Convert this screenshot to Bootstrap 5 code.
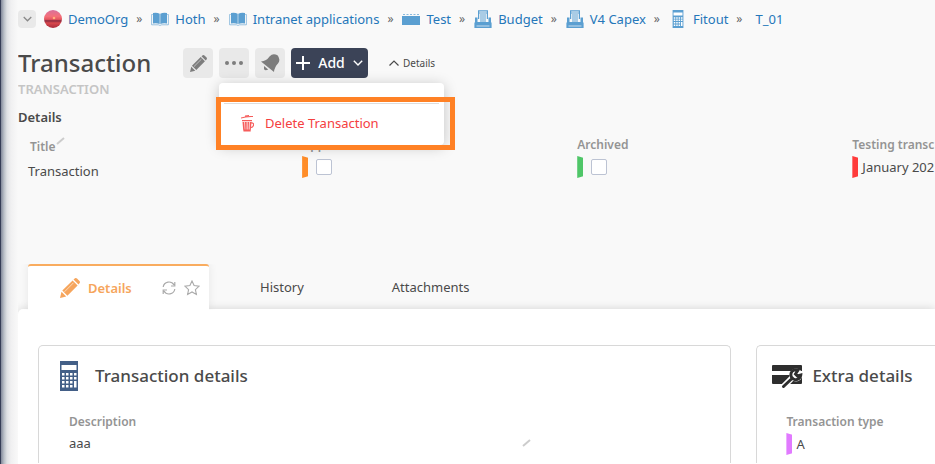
<!DOCTYPE html>
<html lang="en">
<head>
<meta charset="utf-8">
<meta name="viewport" content="width=device-width, initial-scale=1">
<title>Transaction</title>
<link href="https://cdn.jsdelivr.net/npm/bootstrap@5.3.0/dist/css/bootstrap.min.css" rel="stylesheet">
<style>
  body { font-family: "Noto Sans", "Open Sans", sans-serif; font-size: 13px; line-height: 20px; color: #4a4a4a; background: #f9f9f9; overflow: hidden; }
  svg { display: block; flex: none; }
  .shell { min-height: 100vh; border-left: 1px solid #363e57; }
  .edge { width: 17px; flex: none; background: linear-gradient(to right, #81889a 0, #b9bfc7 3px, #dfe1e4 6px, #f0f0f1 10px, #f9f9f9 17px); }
  .crumbs { padding-top: 9px; }
  .crumbs a { color: #2577b9; text-decoration: none; gap: 6px; }
  .crumbs li { display: flex; align-items: center; }
  .crumbs li + li::before { content: "»"; color: #666; font-size: 12px; margin: 0 9px 0 8px; line-height: 20px; }
  .ic { color: #5b9fd1; }
  .toggle-box { width: 18px; height: 18px; background: #e9e9e9; color: #888; border: 0; border-radius: 4px; margin-right: 8px; }
  .head-row { margin-top: 19px; height: 30px; }
  h1 { font-size: 24px; line-height: 30px; font-weight: 500; margin: 0; width: 165px; }
  .tools { gap: 6px; }
  .tool { width: 30px; height: 30px; background: #e9e9e9; color: #7d7d7d; border: 0; border-radius: 4px; }
  .add { height: 30px; width: 77px; background: #3b4357; color: #fff; border: 0; border-radius: 4px; font-weight: 500; font-size: 14px; padding: 0 5px; }
  .fold { border: 0; background: none; font-size: 10px; color: #4a4a4a; margin-left: 15px; }
  .actions { top: 35px; left: 0; width: 225px; background: #fff; border-radius: 4px; box-shadow: 0 2px 14px rgba(0,0,0,.22); padding: 20px 5px 3px; z-index: 5; }
  .actions hr { margin: 0; border-top: 1px solid #ddd; opacity: 1; }
  .remove { color: #f5403f; background: none; border: 0; height: 38px; padding: 0 17px; gap: 11px; }
  .callout { top: 14px; left: -3px; right: -11px; bottom: -5px; border: 5px solid #ff8125; pointer-events: none; }
  .kind { font-size: 13px; line-height: 20px; margin-top: 1px; font-weight: 600; color: #c5c5c5; }
  h2 { font-size: 13px; line-height: 20px; font-weight: 600; margin: 8px 0 0; }
  .fields { margin: 8px 0 0 9px; height: 129px; }
  .field-col { flex: 0 0 30.3%; white-space: nowrap; }
  .name-col { padding: 2px 0 0 1px; }
  .name-col .cap { padding-left: 2px; }
  .cap { font-size: 12px; line-height: 20px; font-weight: 600; color: #949494; display: block; }
  .fields .cap { margin-bottom: 1px; }
  .flag { width: 6px; height: 22px; flex: none; clip-path: polygon(0 0, 100% 8%, 100% 92%, 0 100%); }
  .orange { background: #ff8d29; } .green { background: #4fc668; } .red { background: #ff3b3b; } .violet { background: #e17aff; }
  .form-check-input.tick { width: 16px; height: 16px; border: 1px solid #bcc3d3; border-radius: 2px; margin: 0 0 0 8px; }
  .tabs { margin-left: 10px; height: 45px; }
  .tab-on { width: 181px; height: 46px; background: #fff; border-top: 2px solid #f9ac5f; border-radius: 3px 3px 0 0; color: #f6a55c; font-weight: 600; box-shadow: 0 -1px 10px rgba(0,0,0,.08); clip-path: inset(0 -12px 0 -12px); padding: 0 9px 0 32px; position: relative; z-index: 2; }
  .tab-on button, .tabs > button { background: none; border: 0; padding: 0; color: inherit; font-weight: inherit; }
  .tab-on button.mini { color: #aaa; }
  .tabs > button.t2 { margin-left: 51px; } .tabs > button.t3 { margin-left: 88px; }
  .panel { background: #fff; border-radius: 5px 0 0 0; box-shadow: 0 -1px 9px rgba(0,0,0,.13); padding: 36px 0 2px 20px; gap: 25px; }
  .box { border: 1px solid #d8d8d8; border-bottom: 0; border-radius: 5px 5px 0 0; background: #fff; }
  .box-main { flex: 0 0 77.3%; padding: 15px 20px 8px; }
  .box-side { flex: 1 0 0; border-right: 0; border-radius: 5px 0 0 0; padding: 15px 15px 8px; white-space: nowrap; }
  h3 { font-size: 17px; line-height: 30px; font-weight: 500; margin: 0; }
  .box-body { margin: 21px 0 0 10px; }
  .box-side .box-body { margin-left: 14px; }
  .box-body .cap { margin-bottom: 1px; }
  .value-row { width: 72%; }
</style>
<script src="https://cdn.jsdelivr.net/npm/bootstrap@5.3.0/dist/js/bootstrap.bundle.min.js"></script>
</head>
<body>
<svg width="0" height="0" class="position-absolute" aria-hidden="true">
  <symbol id="book" viewBox="0 0 18 14"><path fill="currentColor" d="M2 1Q6 .3 8.700 1.800v10.200Q6 10.800 2 11.500zM16 1Q12 .3 9.300 1.800v10.200Q12 10.800 16 11.500z"/><path fill="none" stroke="currentColor" opacity=".6" d="M1.800 2.500H.6v10.300h6.600q.8 0 1.800.8 1-.8 1.800-.8h6.600V2.500h-1.200"/></symbol>
  <symbol id="printer" viewBox="0 0 18 18"><path fill="none" stroke="currentColor" stroke-width="1.200" d="M4.600 9V.8h8.800V9M5 3h8"/><path fill="currentColor" d="M6 4.500h6v1H6zM6 6.500h6v1H6zM6 8.500h6v1H6zM6 10.500h6v1H6zM1 7.500h2.500v5H1zM14.500 7.500H17v5h-2.500zM3.500 12h11v1.500h-11zM.4 12.500h17.200V18H.4z"/><path fill="#f9f9f9" opacity=".7" d="M2.500 15.500h13v1h-13z"/></symbol>
  <symbol id="calc" viewBox="0 0 18 30"><path fill="currentColor" d="M0 0h18v30H0z"/><path fill="#fff" d="M1.500 4h15v5h-15zM2 12h2.500v2.500H2zM6 12h2.500v2.500H6zM10 12h2.500v2.500H10zM14 12h2.500v2.500H14zM2 16h2.500v2.500H2zM6 16h2.500v2.500H6zM10 16h2.500v2.500H10zM14 16h2.500v2.500H14zM2 20h2.500v2.500H2zM6 20h2.500v2.500H6zM10 20h2.500v2.500H10zM14 20h2.500v6.500H14zM2 24h2.500v2.500H2zM6 24h2.500v2.500H6zM10 24h2.500v2.500H10z"/></symbol>
  <symbol id="pencil" viewBox="0 0 20 20"><path fill="currentColor" d="M0 20l1.500-6.200 4.700 4.700zM2.300 12.600L12.600 2.400l5 5L7.400 17.700zM13.500 1.500L15 .3q1-.6 2 .2L19.500 3q.8 1 .2 2l-1.200 1.500z"/><path stroke="#fff" stroke-width=".8" opacity=".75" d="M4.500 13.800l9-9"/></symbol>
  <symbol id="down" viewBox="0 0 10 6"><path fill="none" stroke="currentColor" stroke-width="1.400" d="M.8.8L5 5 9.200.8"/></symbol>
</svg>
<div class="shell d-flex">
  <div class="edge"></div>
  <div class="flex-grow-1 overflow-hidden">
    <nav class="crumbs d-flex align-items-center" aria-label="Breadcrumb">
      <button class="toggle-box d-flex align-items-center justify-content-center p-0" type="button" aria-label="Expand path"><svg width="9" height="6"><use href="#down"/></svg></button>
      <ol class="list-unstyled d-flex m-0 text-nowrap">
        <li><a href="#" class="d-flex align-items-center"><svg width="18" height="18" viewBox="0 0 18 18"><defs><linearGradient id="sky" x2="0" y2="1"><stop stop-color="#d9709c"/><stop offset=".35" stop-color="#f4707a"/><stop offset=".52" stop-color="#e5565f"/><stop offset=".6" stop-color="#8a2a40"/><stop offset=".72" stop-color="#d9484d"/><stop offset="1" stop-color="#a82b3b"/></linearGradient></defs><circle cx="9" cy="9" r="9" fill="url(#sky)"/><circle cx="10" cy="8" r="1.300" fill="#ffb07b"/></svg>DemoOrg</a></li>
        <li><a href="#" class="d-flex align-items-center"><svg class="ic" width="18" height="14"><use href="#book"/></svg>Hoth</a></li>
        <li><a href="#" class="d-flex align-items-center"><svg class="ic" width="18" height="14"><use href="#book"/></svg>Intranet applications</a></li>
        <li><a href="#" class="d-flex align-items-center"><svg class="ic" width="18" height="12" viewBox="0 0 18 12"><path fill="currentColor" d="M0 3h18v9H0z"/><path fill="currentColor" opacity=".7" d="M1 1h2v1H1zM4.500 1h2v1h-2zM8 1h2v1H8zM11.500 1h2v1h-2zM15 1h2v1h-2z"/></svg>Test</a></li>
        <li><a href="#" class="d-flex align-items-center"><svg class="ic" width="18" height="18"><use href="#printer"/></svg>Budget</a></li>
        <li><a href="#" class="d-flex align-items-center"><svg class="ic" width="18" height="18"><use href="#printer"/></svg>V4 Capex</a></li>
        <li><a href="#" class="d-flex align-items-center"><svg class="ic" width="18" height="18"><use href="#calc"/></svg>Fitout</a></li>
        <li><a href="#" class="ps-1">T_01</a></li>
      </ol>
    </nav>

    <div class="head-row d-flex align-items-center">
      <h1>Transaction</h1>
      <div class="tools d-flex">
        <button class="tool d-flex align-items-center justify-content-center p-0" type="button" aria-label="Edit"><svg width="17" height="17"><use href="#pencil"/></svg></button>
        <div class="position-relative">
          <button class="tool d-flex align-items-center justify-content-center p-0" type="button" aria-label="More actions" aria-expanded="true"><svg width="18" height="4" viewBox="0 0 18 4" fill="currentColor"><circle cx="2" cy="2" r="2"/><circle cx="9" cy="2" r="2"/><circle cx="16" cy="2" r="2"/></svg></button>
          <div class="actions position-absolute">
            <hr>
            <button class="remove d-flex align-items-center w-100" type="button"><svg width="13" height="17" viewBox="0 0 13 17" fill="currentColor" opacity=".85"><path d="M0 2.500Q5 .5 12 1v1Q5 1.700 0 3.500zM4 .4l4-.4v1L4 1.500zM1 5h10v1.200H1zM1.500 7h1.800l.5 8H2.200zM4 7h1.700v8h-1.400zM6.500 7H8l-.3 8h-1.200zM8.700 7h1.800l-.7 8H8.500zM2.200 14.500h7.500v2H2.500z"/><path d="M10 8q3-.4 2.500 2.300-.4 2.200-3 2.300" fill="none" stroke="currentColor" stroke-width="1.200"/></svg>Delete Transaction</button>
            <div class="callout position-absolute"></div>
          </div>
        </div>
        <button class="tool d-flex align-items-center justify-content-center p-0" type="button" aria-label="Notifications"><svg width="19" height="18" viewBox="0 0 19 18" fill="currentColor"><path d="M0 7.500Q5.500 7 8.500 2.500 12-1.500 16.500 1.300 20 5.500 17 9.500q-3.500 3.500-4 8.500zM3 12l4.200 3.500Q4 17.200 3 15z"/></svg></button>
        <button class="add d-flex align-items-center justify-content-between" type="button"><svg width="14" height="14" viewBox="0 0 14 14"><path stroke="#fff" stroke-width="2" d="M7 0v14M0 7h14"/></svg>Add<svg width="10" height="6"><use href="#down"/></svg></button>
      </div>
      <button class="fold d-flex align-items-center gap-1" type="button"><svg width="10" height="6" viewBox="0 0 10 6"><path fill="none" stroke="currentColor" stroke-width="1.200" d="M.5 5.500L5 1l4.500 4.500"/></svg>Details</button>
    </div>
    <div class="kind">TRANSACTION</div>
    <h2>Details</h2>

    <div class="fields d-flex">
      <div class="field-col name-col"><span class="cap d-flex">Title<svg width="9" height="8" viewBox="0 0 9 8"><path stroke="#ccc" stroke-width="2" d="M1 7l7-6"/></svg></span><div class="mt-1">Transaction</div></div>
      <div class="field-col"><label class="cap" for="approved">Approved</label><div class="d-flex align-items-center"><span class="flag orange"></span><input class="form-check-input tick" type="checkbox" id="approved"></div></div>
      <div class="field-col"><label class="cap" for="archived">Archived</label><div class="d-flex align-items-center"><span class="flag green"></span><input class="form-check-input tick" type="checkbox" id="archived"></div></div>
      <div class="field-col"><span class="cap">Testing transc</span><div class="d-flex align-items-center"><span class="flag red me-1"></span>January 202</div></div>
    </div>

    <div class="tabs d-flex align-items-center">
      <div class="tab-on d-flex align-items-center align-self-start">
        <button type="button" class="d-flex align-items-center gap-2"><svg width="20" height="20"><use href="#pencil"/></svg>Details</button>
        <button type="button" class="mini ms-auto" aria-label="Refresh"><svg width="14" height="14" viewBox="0 0 14 14" fill="none" stroke="currentColor" stroke-width="1.200"><path d="M1.200 6A5.800 5.800 0 0 1 12 4M12.800 1v4H9M12.800 8A5.800 5.800 0 0 1 2 10M1.200 13V9H5"/></svg></button>
        <button type="button" class="mini ms-2" aria-label="Favourite"><svg width="16" height="16" viewBox="0 0 16 16" fill="none" stroke="currentColor" stroke-width="1.100"><path d="M8 1l2.100 4.600 5 .6-3.700 3.400 1 4.900L8 12l-4.400 2.500 1-4.900L.9 6.200l5-.6z"/></svg></button>
      </div>
      <button type="button" class="t2">History</button>
      <button type="button" class="t3">Attachments</button>
    </div>

    <div class="panel d-flex">
      <section class="box box-main">
        <div class="d-flex align-items-center gap-3"><svg width="20" height="30" color="#435f87"><use href="#calc"/></svg><h3>Transaction details</h3></div>
        <div class="box-body">
          <span class="cap">Description</span>
          <div class="value-row d-flex align-items-center">aaa<svg width="9" height="8" viewBox="0 0 9 8" class="ms-auto"><path stroke="#ccc" stroke-width="2" d="M1 7l7-6"/></svg></div>
        </div>
      </section>
      <section class="box box-side">
        <div class="d-flex align-items-center gap-2"><svg width="32" height="26" viewBox="0 0 32 26"><path fill="#2e2e2e" d="M1 2h28q1 0 1 1v5H0V3q0-1 1-1zM0 12h30v8q0 1-1 1H1q-1 0-1-1z"/><path fill="none" stroke="#fff" stroke-width="6" d="M11 24l9-9"/><circle cx="24" cy="12" r="6.500" fill="#fff"/><path fill="none" stroke="#2e2e2e" stroke-width="3" stroke-linecap="round" d="M11.500 23.500l9-8.500M26 7.200a5 5 0 1 0 2.800 4.800l-3.300 1-2-2z"/></svg><h3>Extra details</h3></div>
        <div class="box-body">
          <span class="cap">Transaction type</span>
          <div class="d-flex align-items-center"><span class="flag violet me-1"></span>A</div>
        </div>
      </section>
    </div>
  </div>
</div>
</body>
</html>
